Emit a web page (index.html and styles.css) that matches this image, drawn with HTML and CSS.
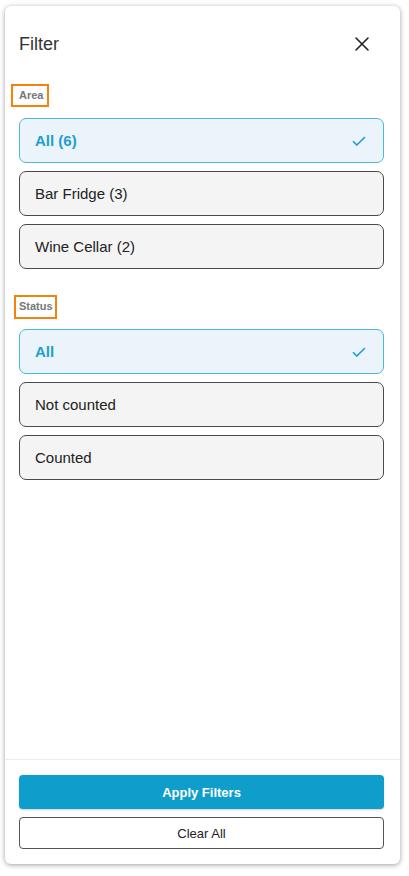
FILE: index.html
```html
<!DOCTYPE html>
<html lang="en">
<head>
<meta charset="utf-8">
<title>Filter</title>
<link rel="stylesheet" href="styles.css">
</head>
<body>
<div class="panel">
  <div class="header">
    <h1 class="title">Filter</h1>
    <button class="close" aria-label="Close">
      <svg width="14" height="14" viewBox="0 0 14 14"><path d="M1 1L13 13M13 1L1 13" stroke="#222" stroke-width="1.6" fill="none" stroke-linecap="round"/></svg>
    </button>
  </div>
  <div class="content">
    <div class="section section-area">
      <div class="label label-area">Area</div>
      <div class="options">
        <div class="option selected"><span>All (6)</span>
          <svg class="check" width="14" height="10" viewBox="0 0 14 10"><path d="M1 5.2L4.8 9L13 1" stroke="#1b9fce" stroke-width="1.6" fill="none"/></svg>
        </div>
        <div class="option"><span>Bar Fridge (3)</span></div>
        <div class="option"><span>Wine Cellar (2)</span></div>
      </div>
    </div>
    <div class="section section-status">
      <div class="label label-status">Status</div>
      <div class="options">
        <div class="option selected"><span>All</span>
          <svg class="check" width="14" height="10" viewBox="0 0 14 10"><path d="M1 5.2L4.8 9L13 1" stroke="#1b9fce" stroke-width="1.6" fill="none"/></svg>
        </div>
        <div class="option"><span>Not counted</span></div>
        <div class="option"><span>Counted</span></div>
      </div>
    </div>
  </div>
  <div class="footer">
    <button class="btn btn-apply">Apply Filters</button>
    <button class="btn btn-clear">Clear All</button>
  </div>
</div>
</body>
</html>
```

FILE: styles.css
```css
* { box-sizing: border-box; }
html, body { margin: 0; padding: 0; background: #ffffff; }
body {
  font-family: "Liberation Sans", Arial, sans-serif;
  color: #222;
  width: 409px;
  height: 876px;
  overflow: hidden;
}
.panel {
  margin: 6px 0 0 5px;
  width: 395px;
  height: 858px;
  background: #fff;
  border-radius: 6px;
  box-shadow: 0 1px 5px rgba(0,0,0,0.38);
  display: flex;
  flex-direction: column;
}
.header {
  height: 76px;
  padding: 0 31px 0 14px;
  display: flex;
  align-items: center;
  justify-content: space-between;
}
.title {
  margin: 0;
  font-size: 18px;
  font-weight: normal;
  color: #333;
}
.close {
  border: 0;
  background: none;
  padding: 0;
  width: 14px;
  height: 14px;
  display: flex;
  cursor: pointer;
}
.content {
  flex: 1;
  padding: 2px 16px 0 14px;
}
.label {
  display: inline-block;
  border: 2px solid #f5820b;
  font-size: 11px;
  font-weight: bold;
  color: #777;
  line-height: 15px;
}
.label-area { margin-left: -8px; padding: 2px 4px 2px 6px; }
.label-status { margin-left: -5px; padding: 2px 2px 3px 3px; }
.section-status { margin-top: 26px; }
.options {
  display: flex;
  flex-direction: column;
  gap: 8px;
  margin-top: 11px;
}
.section-status .options { margin-top: 10px; }
.option {
  height: 45px;
  border: 1px solid #4a4a4a;
  border-radius: 7px;
  background: #f4f4f4;
  display: flex;
  align-items: center;
  justify-content: space-between;
  padding: 0 17px 0 15px;
  font-size: 15px;
  color: #222;
}
.option.selected {
  background: #ebf3fb;
  border-color: #4cb7dc;
  color: #1b9fce;
  font-weight: bold;
}
.footer {
  border-top: 1px solid #ececec;
  padding: 15px 16px 15px 14px;
  display: flex;
  flex-direction: column;
  gap: 8px;
}
.btn {
  font-family: "Liberation Sans", Arial, sans-serif;
  font-size: 13px;
  border-radius: 4px;
  cursor: pointer;
  width: 100%;
}
.btn-apply {
  height: 34px;
  background: #0f9ecb;
  color: #fff;
  border: 0;
  font-weight: bold;
  box-shadow: 0 1px 2px rgba(0,0,0,0.2);
}
.btn-clear {
  height: 32px;
  background: #fff;
  color: #222;
  border: 1px solid #555;
}
```
